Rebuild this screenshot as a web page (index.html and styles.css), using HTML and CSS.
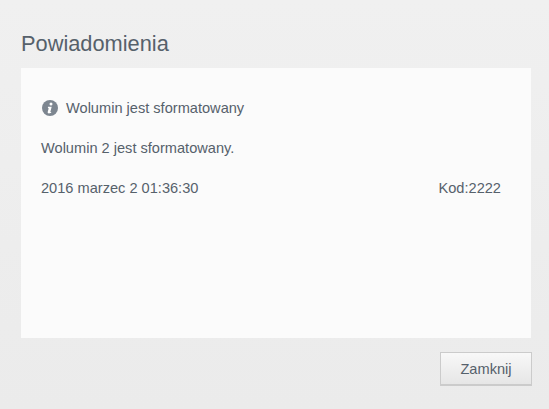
FILE: index.html
```html
<!DOCTYPE html>
<html lang="pl">
<head>
  <meta charset="UTF-8">
  <title>Powiadomienia</title>
  <link rel="stylesheet" href="styles.css">
</head>
<body>
  <div class="dialog">
    <h1 class="title">Powiadomienia</h1>
    <div class="content">
      <div class="heading">
        <svg class="icon" viewBox="0 0 16 16" width="16" height="16">
          <circle cx="8" cy="8" r="8" fill="#7d8690"/>
          <circle cx="9" cy="4.1" r="1.5" fill="#fff"/>
          <path d="M6 6.8h3.7l-1.3 4.9c-.1.4.2.5.9.2l-.2.9c-1 .5-1.5.6-2.1.6-1 0-1.5-.6-1.3-1.4l1-3.7-.8-.2z" fill="#fff"/>
        </svg>
        <span>Wolumin jest sformatowany</span>
      </div>
      <p class="message">Wolumin 2 jest sformatowany.</p>
      <div class="meta">
        <span>2016 marzec 2 01:36:30</span>
        <span>Kod:2222</span>
      </div>
    </div>
    <div class="actions">
      <button class="close">Zamknij</button>
    </div>
  </div>
</body>
</html>
```

FILE: styles.css
```css
* {
  box-sizing: border-box;
}

body {
  margin: 0;
  height: 409px;
  overflow: hidden;
  font-family: "Liberation Sans", Arial, sans-serif;
  color: #56616b;
  background: linear-gradient(to bottom, #f0f0f0, #ebebeb);
}

.dialog {
  height: 409px;
  padding: 30px 17px 0 21px;
}

.title {
  margin: 0;
  height: 38px;
  font-size: 21.8px;
  font-weight: normal;
  line-height: 27px;
}

.content {
  width: 510px;
  height: 270px;
  padding: 30px 30px 0 20px;
  background: #fbfbfb;
  font-size: 14.6px;
}

.heading {
  display: flex;
  align-items: center;
  gap: 8px;
  height: 20px;
}

.icon {
  margin-left: 1px;
}

.message {
  margin: 20px 0 0;
  line-height: 20px;
}

.meta {
  display: flex;
  justify-content: space-between;
  margin-top: 20px;
  line-height: 20px;
}

.actions {
  display: flex;
  justify-content: flex-end;
  padding-top: 14px;
}

.close {
  width: 92px;
  height: 34px;
  border: 1px solid #cbcbcb;
  border-bottom-width: 2px;
  background: linear-gradient(to bottom, #f8f8f8, #e6e6e6);
  color: #56616b;
  font-family: inherit;
  font-size: 14.6px;
}
```
